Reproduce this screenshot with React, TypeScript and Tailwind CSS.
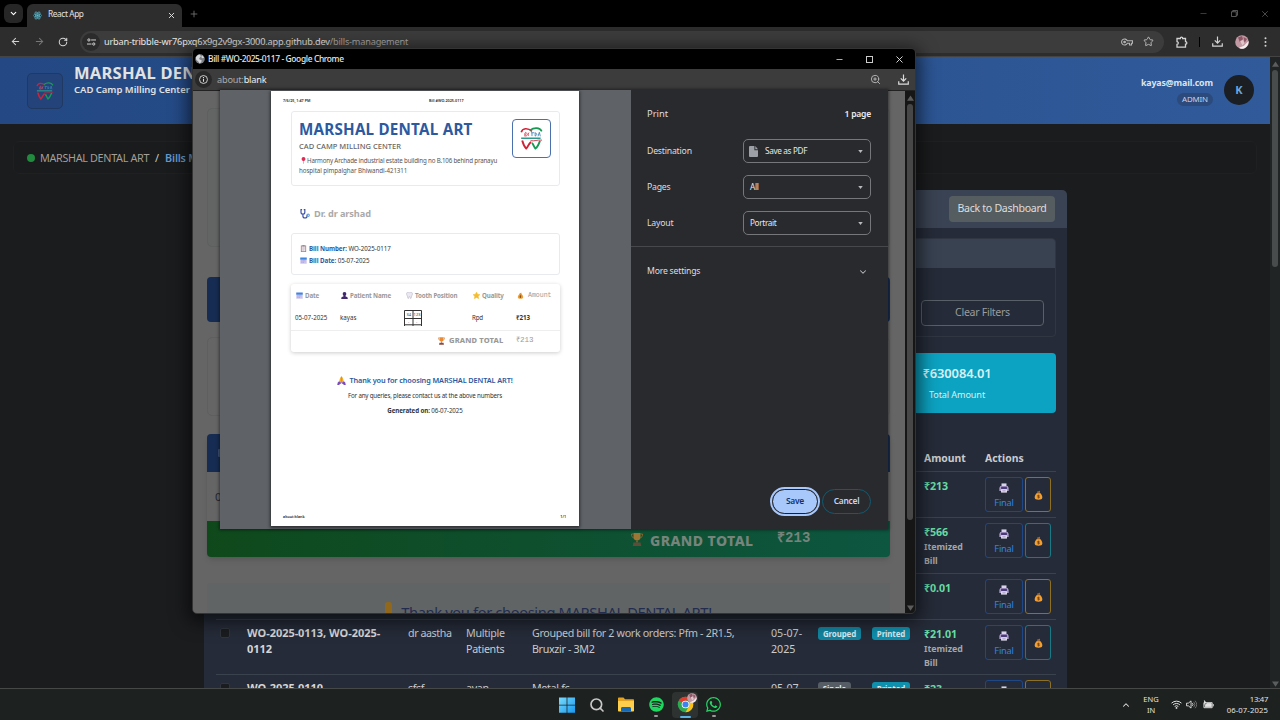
import type { ReactNode } from "react";
import { FaSpotify, FaWhatsapp } from "react-icons/fa";
import { ArrowLeft, ArrowRight, ChevronDown, ChevronUp, Minus, Plus, RotateCw, Search, Star, X, ZoomIn } from "lucide-react";

type IconProps = { className?: string };

function ReactLogo({ className }: IconProps) {
  return (
    <svg viewBox="0 0 24 24" className={className} fill="none" stroke="#58c4dc" strokeWidth="1.6">
      <circle cx="12" cy="12" r="2" fill="#58c4dc" />
      <ellipse cx="12" cy="12" rx="11" ry="4.3" />
      <ellipse cx="12" cy="12" rx="11" ry="4.3" transform="rotate(60 12 12)" />
      <ellipse cx="12" cy="12" rx="11" ry="4.3" transform="rotate(120 12 12)" />
    </svg>
  );
}

function ToothLogo({ className }: IconProps) {
  return (
    <svg viewBox="0 0 24 24" className={className} fill="none" strokeWidth="1.5">
      <path d="M1.3 5.5C2.500 1 8 .5 12.500 4.500" stroke="#cf2438" strokeWidth="1.700" />
      <path d="M10.500 3.300C15 .2 20.500 .5 22.700 4.500" stroke="#189a55" strokeWidth="1.700" />
      <path d="M4.500 9.500c2-1 2.500-4 1.500-4s-2 4 0 4 2-3 3.200-3.500c-.8 1.500-.8 3 .2 3.200" stroke="#d9485c" strokeWidth="0.9" />
      <path d="M11.500 6h3.500M12.500 6v3.500M15.800 9.500V6q3.500 1.500 0 3.500M18.800 9.700l1.400-4.200 1 4.200" stroke="#3c83b8" strokeWidth="0.9" />
      <path d="M1.200 11.800h20.300" stroke="#2a9b8c" strokeWidth="1.500" />
      <path d="M11 14.300c4 .8 7-1.200 12-.6" stroke="#cf2438" strokeWidth="0.9" />
      <path d="M2.300 14c1 3.500 2.700 7 4.200 8.500 1.500-1.200 2.200-4.500 5-7" stroke="#cf2438" strokeWidth="2" />
      <path d="M12.500 16.500c1.500 1.500 2.200 4.500 3.600 6 2-1.300 3.500-4.500 4.700-8" stroke="#189a55" strokeWidth="2" />
    </svg>
  );
}

function DownloadIcon({ className }: IconProps) {
  return (
    <svg viewBox="0 0 12 12" className={className} fill="none" stroke="currentColor" strokeWidth="1.300">
      <path d="M6 .5v7M3 4.800l3 3 3-3M.8 8v3h10.400V8" />
    </svg>
  );
}

function ExtensionIcon({ className }: IconProps) {
  return (
    <svg viewBox="0 0 12 12" className={className} fill="none" stroke="currentColor" strokeWidth="1.300">
      <path d="M1 2.500h3.300c0-1.800 2.400-1.800 2.400 0H9.500v3.200c1.800 0 1.800 2.400 0 2.400v3H1V8.300c1.700 0 1.700-2.600 0-2.600z" />
    </svg>
  );
}

function TuneIcon({ className }: IconProps) {
  return (
    <svg viewBox="0 0 12 10" className={className} fill="none" stroke="currentColor" strokeWidth="1.300">
      <circle cx="2.500" cy="2.300" r="1.500" />
      <path d="M5.500 2.300H12M0 7.700h6" />
      <circle cx="9" cy="7.700" r="1.500" />
    </svg>
  );
}

function KeyIcon({ className }: IconProps) {
  return (
    <svg viewBox="0 0 12 8" className={className} fill="none" stroke="currentColor" strokeWidth="1.100">
      <path d="M6.300 2.800A3 3 0 1 0 6.300 5.200H8.500V7h2V5.200h1V2.800z" />
      <circle cx="3.600" cy="4" r=".8" fill="currentColor" />
    </svg>
  );
}

function GlobeIcon({ className }: IconProps) {
  return (
    <svg viewBox="0 0 12 12" className={className}>
      <circle cx="6" cy="6" r="5.700" fill="#7d8186" />
      <path d="M1 4l2.500-2.800L6 .7 7 3 5 5l.500 1.500L8 7.500 7.500 10l-2 1.500L4 9 1.500 7zM8.500 1.500l2.500 3-2.500.5-1-1.500z" fill="#d6d8db" />
    </svg>
  );
}

function MoneyBag({ className }: IconProps) {
  return (
    <svg viewBox="0 0 12 14" className={className}>
      <path d="M4.500 3.500L5 1.500l1.200 1L7.500.8l.3 2.700z" fill="#e98a1f" />
      <path d="M4.200 3.800h3.600C10 5.500 11.600 8 11.300 11c-.3 2-1.800 2.500-5.300 2.500S1 13 .7 11C.4 8 2 5.500 4.200 3.800z" fill="#f2a032" />
      <path d="M4 4h4" stroke="#9b5b1d" strokeWidth="1.100" />
      <path d="M7.600 7.600H5.200c-1 0-1 1.500 0 1.500h1.600c1 0 1 1.700 0 1.700H4.400M6 6.500v5.400" stroke="#6d3b18" strokeWidth=".9" fill="none" />
    </svg>
  );
}

function PrinterGlyph({ className }: IconProps) {
  return (
    <svg viewBox="0 0 12 12" className={className}>
      <path d="M3 .5h6v4H3z" fill="#d9d3ea" />
      <path d="M1.500 3.500h9L11.600 6v3.500H.4V6z" fill="#a99bc6" />
      <path d="M2.500 4.500h7v3h-7z" fill="#4a3a78" />
      <path d="M2.500 7.500h7v4h-7z" fill="#e9e4f5" />
      <path d="M4 9.500h4" stroke="#8a79b5" />
    </svg>
  );
}

function Trophy({ className }: IconProps) {
  return (
    <svg viewBox="0 0 12 14" className={className}>
      <path d="M2.500.5h7V4c0 3-1.500 4-3.500 4S2.500 7 2.500 4z" fill="#e98a35" />
      <path d="M2.500 1.500h-2c0 2.500.7 3.500 2.500 4M9.500 1.500h2c0 2.500-.7 3.500-2.500 4" stroke="#c9702a" fill="none" />
      <path d="M5.200 8h1.600v2H5.200z" fill="#c9702a" />
      <path d="M2.500 10h7l.8 3.500H1.700z" fill="#8c4a3c" />
    </svg>
  );
}

function Calendar({ className }: IconProps) {
  return (
    <svg viewBox="0 0 12 12" className={className}>
      <path d="M.5 1h11v10.500H.5z" fill="#c9c4ee" />
      <path d="M.5 1h11v3.500H.5z" fill="#3b86e0" />
      <path d="M2.500 6.500h7M2.500 9h5" stroke="#9a8fd6" strokeWidth="1.200" strokeDasharray="1.500 1" />
    </svg>
  );
}

function Clipboard({ className }: IconProps) {
  return (
    <svg viewBox="0 0 12 12" className={className}>
      <path d="M1.500 1h9v10.800h-9z" fill="#b5776b" />
      <path d="M2.800 2.200h6.400v8.500H2.800z" fill="#f1e6ea" />
      <path d="M4 0h4v2.400H4z" fill="#8b8fa6" />
      <path d="M4 4.800h4M4 6.800h4M4 8.800h3" stroke="#a8a3b5" strokeWidth=".8" />
    </svg>
  );
}

function Person({ className }: IconProps) {
  return (
    <svg viewBox="0 0 12 12" className={className} fill="#432a6e">
      <path d="M6 0c2.300 0 3.200 1.500 3 3.500C8.900 5.300 8 6 7.500 6.800c0 1.200 3.800 1 4 3.200V12H.5v-2c.2-2.200 4-2 4-3.200C4 6 3.100 5.300 3 3.500 2.800 1.500 3.700 0 6 0z" />
    </svg>
  );
}

function Tooth({ className }: IconProps) {
  return (
    <svg viewBox="0 0 12 12" className={className} fill="#ece8f2" stroke="#b9b3c6" strokeWidth="1">
      <path d="M1 3c0-3 3-3 5-1.800C8 0 11 0 11 3c0 3-1.500 3-1.700 5.500-.2 3.500-2 3.800-2.300.5C6.800 7 5.200 7 5 9c-.3 3.300-2.100 3-2.300-.5C2.500 6 1 6 1 3z" />
    </svg>
  );
}

function SolidStar({ className }: IconProps) {
  return (
    <svg viewBox="0 0 12 12" className={className}>
      <path d="M6 .3l1.800 3.600 4 .6-2.900 2.800.7 4L6 9.400l-3.600 1.900.7-4L.2 4.500l4-.6z" fill="#f5bd2c" stroke="#f5bd2c" />
    </svg>
  );
}

function Pin({ className }: IconProps) {
  return (
    <svg viewBox="0 0 8 12" className={className}>
      <path d="M4 5v6.500" stroke="#9aa0a8" strokeWidth="1.200" />
      <circle cx="4" cy="3.500" r="3.300" fill="#e02a56" />
    </svg>
  );
}

function Stethoscope({ className }: IconProps) {
  return (
    <svg viewBox="0 0 12 12" className={className} fill="none" stroke="#3b4fa8" strokeWidth="1.400">
      <path d="M2.500.8H1.200v3a2.300 2.300 0 0 0 4.600 0v-3H4.500M3.500 6v2.300c0 3.300 5 3.300 5 0V7" />
      <circle cx="9.800" cy="7.600" r="1.400" stroke="#6aa0dd" />
    </svg>
  );
}

function Praying({ className }: IconProps) {
  return (
    <svg viewBox="0 0 12 12" className={className}>
      <path d="M6 .3c-1.500 1-2.500 4-3 7l3 2 3-2c-.5-3-1.500-6-3-7z" fill="#f3a92c" />
      <path d="M6 1v8" stroke="#c9761c" strokeWidth=".6" />
      <path d="M2.800 7L6 9.300 2.500 12H.3L1 8.500zM9.200 7L6 9.300 9.500 12h2.200L11 8.500z" fill="#7b4bb8" />
    </svg>
  );
}

function ChromeIcon({ className }: IconProps) {
  return (
    <svg viewBox="0 0 24 24" className={className}>
      <circle cx="12" cy="12" r="11" fill="#2da94f" />
      <path d="M12 12L2.500 6.500A11 11 0 0 1 21.500 6.500H12z" fill="#e33b2e" />
      <path d="M12 12l9.500-5.500A11 11 0 0 1 12 23l4.700-8.300z" fill="#fbc116" />
      <circle cx="12" cy="12" r="5.400" fill="#fff" />
      <circle cx="12" cy="12" r="4.300" fill="#3f82ee" />
    </svg>
  );
}

function Avatar({ className }: IconProps) {
  return (
    <svg viewBox="0 0 14 14" className={className}>
      <circle cx="7" cy="7" r="6.800" fill="#c29aa4" />
      <path d="M3 2.500L7 1l1 3-3 3.500zM8.500 2l3.500 2-2.500 4z" fill="#8e5666" />
      <path d="M13.600 6c.3 4-3 7.800-6.600 7.800-1.500 0-2.500-.5-3-1l5-2z" fill="#f3eff0" />
      <path d="M5 6l3-1 1.500 3-2 2.500z" fill="#e2c6cc" />
    </svg>
  );
}

function FolderIcon({ className }: IconProps) {
  return (
    <svg viewBox="0 0 16 15" className={className}>
      <path d="M0 1.500C0 .8.400.5 1 .5h4.500L7 2.200h8c.6 0 1 .4 1 1V5H0z" fill="#e5a322" />
      <path d="M0 4h16v9.500c0 .6-.4 1-1 1H1c-.6 0-1-.4-1-1z" fill="#fdcf4d" />
      <path d="M3 14.500v-3c0-1 .6-1.500 1.500-1.500h7c.9 0 1.500.5 1.500 1.500v3z" fill="#1769b3" />
    </svg>
  );
}

function Caret() {
  return (
    <svg viewBox="0 0 6 4" className="h-[3px] w-[5px] shrink-0">
      <path d="M0 0h6L3 4z" fill="#b8babd" />
    </svg>
  );
}

function Arrow({ down = false, className = "" }: { down?: boolean; className?: string }) {
  return (
    <svg viewBox="0 0 8 6" className={`h-[6px] w-[7px] ${className}`}>
      <path d={down ? "M0 0h8L4 6z" : "M0 6h8L4 0z"} fill="currentColor" />
    </svg>
  );
}

function BrowserChrome() {
  return (
    <>
      <div className="flex h-[27px] shrink-0 items-center bg-black">
        <div className="ml-1 flex size-[19px] items-center justify-center rounded-[6px] bg-[#262626]">
          <ChevronDown className="size-[9px] text-white" strokeWidth={3} />
        </div>
        <div className="ml-1 flex h-[23px] w-[155px] items-center self-end rounded-t-[6px] bg-[#2d2d2d] pb-[1px] pl-[6px] pr-[6px] text-[8.300px] text-[#e3e3e3]">
          <ReactLogo className="size-[9px]" />
          <span className="ml-[6px] grow pb-px tracking-[-0.4px]">React App</span>
          <X className="size-[9px]" strokeWidth={2.500} />
        </div>
        <Plus className="ml-[7px] size-[10px] text-[#777]" strokeWidth={2} />
        <div className="ml-auto mr-[10px] flex items-center text-[#666]">
          <Minus className="size-[9px]" strokeWidth={1.500} />
          <svg viewBox="0 0 8 8" className="ml-[23px] size-[7px]" fill="none" stroke="currentColor">
            <path d="M.5 2h5.500v5.500H.5zM2 2V.5h5.500V6H6" />
          </svg>
          <X className="ml-[22px] size-[10px]" strokeWidth={1.700} />
        </div>
      </div>
      <div className="flex h-[30px] shrink-0 items-center border-b border-[#444] bg-[#2d2d2d] text-[#d4d4d4]">
        <ArrowLeft className="ml-[10px] size-[11px]" strokeWidth={2.200} />
        <ArrowRight className="ml-[13px] size-[11px] text-[#777]" strokeWidth={2.200} />
        <RotateCw className="ml-[13px] size-[10px]" strokeWidth={2.500} />
        <div className="ml-[12px] flex h-[22px] w-[1084px] items-center rounded-full bg-[#3c3c3c] pl-[2px] pr-[10px]">
          <div className="flex size-[18px] items-center justify-center rounded-full bg-[#2b2b2b]">
            <TuneIcon className="h-[8px] w-[9px]" />
          </div>
          <span className="ml-[4px] grow whitespace-nowrap pt-px text-[9.200px] tracking-[-0.2px] text-[#e6e6e6]">
            urban-tribble-wr76pxq6x9g2v9gx-3000.app.github.dev<span className="text-[#a8a8a8]">/bills-management</span>
          </span>
          <KeyIcon className="h-[8px] w-[12px] text-[#b5b5b5]" />
          <Star className="ml-[10px] size-[11px] text-[#c0c0c0]" strokeWidth={2} />
        </div>
        <ExtensionIcon className="ml-[12px] size-[12px]" />
        <div className="ml-[11px] h-[10px] w-px bg-black" />
        <DownloadIcon className="ml-[12px] size-[11px]" />
        <Avatar className="ml-[12px] size-[14px]" />
        <svg viewBox="0 0 3 12" className="ml-[15px] h-[10px] w-[3px]" fill="currentColor">
          <circle cx="1.500" cy="1.500" r="1.200" />
          <circle cx="1.500" cy="6" r="1.200" />
          <circle cx="1.500" cy="10.500" r="1.200" />
        </svg>
      </div>
    </>
  );
}

function SiteHeader() {
  return (
    <header className="flex h-[67px] shrink-0 items-start bg-linear-to-r from-[#234883] to-[#305a9a]">
      <div className="ml-[27px] mt-[16px] flex size-[36px] items-center justify-center rounded-[5px] border border-[#203962] bg-[#24437a]">
        <ToothLogo className="size-[18px]" />
      </div>
      <div className="ml-[11px] mt-[6px] whitespace-nowrap text-[#e2e2e2]">
        <h1 className="h-[20px] text-[16.500px]/[20px] font-bold tracking-[0.25px]">MARSHAL DENTAL ART</h1>
        <p className="mt-px text-[9.500px]/[12px] font-semibold tracking-[-0.02px]">CAD Camp Milling Center</p>
      </div>
      <div className="ml-auto mt-[20px] flex flex-col items-end">
        <span className="text-[8.800px]/[13px] font-bold tracking-[-0.1px] text-[#dfe3ea]">kayas@mail.com</span>
        <span className="mt-[3px] flex h-[13px] w-[36px] items-center justify-center rounded-full bg-[#2c4a7c] text-[7.900px] tracking-[-0.15px] text-[#c8d3e6]">ADMIN</span>
      </div>
      <div className="ml-[11px] mr-[16px] mt-[18px] flex size-[30px] items-center justify-center rounded-full bg-[#1b1e23] pt-px text-[11px] font-bold text-[#6aa6dc]">K</div>
    </header>
  );
}

type Bill = {
  height: string;
  amount: string;
  itemized?: boolean;
  tone: string;
  number?: string;
  doctor?: string;
  patient?: string;
  work?: string;
  date?: string;
  type?: string;
  typeTone?: string;
};

const bills: Bill[] = [
  { height: "h-[46px]", amount: "₹213", tone: "border-[#8d7022]" },
  { height: "h-[56px]", amount: "₹566", itemized: true, tone: "border-[#197985]" },
  { height: "h-[46px]", amount: "₹0.01", tone: "border-[#8d7022]" },
  {
    height: "h-[55px]", amount: "₹21.01", itemized: true, tone: "border-[#197985]",
    number: "WO-2025-0113, WO-2025-0112", doctor: "dr aastha", patient: "Multiple Patients",
    work: "Grouped bill for 2 work orders: Pfm - 2R1.5, Bruxzir - 3M2", date: "05-07-2025", type: "Grouped", typeTone: "bg-[#1285a0] w-[43px]",
  },
  {
    height: "h-[55px]", amount: "₹23", tone: "border-[#8d7022]",
    number: "WO-2025-0110", doctor: "sfsf", patient: "ayan",
    work: "Metal fc", date: "05-07-2025", type: "Single", typeTone: "bg-[#565d65] w-[33px]",
  },
];

function Badge({ tone, children }: { tone: string; children: ReactNode }) {
  return <span className={`mt-[2px] flex h-[13px] items-center justify-center rounded-[3px] text-[7.900px] font-bold tracking-[-0.1px] text-[#dcebf0] ${tone}`}>{children}</span>;
}

function BillRow({ bill }: { bill: Bill }) {
  return (
    <div className={`grid shrink-0 grid-cols-[31px_161px_58px_66px_239px_47px_54px_52px_61px_1fr] items-start border-t border-[#3a424d] pt-[5px] text-[10.700px]/[16px] text-[#c9cbcf] ${bill.height}`}>
      <span className="ml-[4px] mt-[3px] size-[10px] rounded-[2px] border border-[#30353d] bg-[#1a1c20]" />
      <span className="w-[150px] text-[11px] font-bold tracking-[-0.04px] text-[#d6d6d6]">{bill.number}</span>
      <span className="tracking-[-0.43px]">{bill.doctor}</span>
      <span className="w-[50px] tracking-[-0.3px]">{bill.patient}</span>
      <span className="w-[215px] tracking-[-0.33px]">{bill.work}</span>
      <span className="w-[36px] tracking-[-0.05px]">{bill.date}</span>
      <span>{bill.type && <Badge tone={bill.typeTone ?? ""}>{bill.type}</Badge>}</span>
      <span>{bill.type && <Badge tone="w-[38px] bg-[#0f90ad]">Printed</Badge>}</span>
      <span>
        <span className="mt-[0.5px] block text-[10.700px]/[16px] font-bold tracking-[-0.1px] text-[#67dca5]">{bill.amount}</span>
        {bill.itemized && <span className="mt-[0.5px] block w-[44px] text-[8.800px]/[14px] font-bold text-[#a6a6a6]">Itemized Bill</span>}
      </span>
      <span className="flex gap-[2px]">
        <span className="flex h-[35px] w-[38px] flex-col items-center rounded-[3px] border border-[#204785] pt-[5px] text-[9.300px]/[14px] tracking-[-0.25px] text-[#2f85e0]">
          <PrinterGlyph className="size-[10px]" />
          <span className="mt-[3px]">Final</span>
        </span>
        <span className={`flex h-[35px] w-[26px] items-center justify-center rounded-[3px] border ${bill.tone}`}>
          <MoneyBag className="mt-px h-[10px] w-[9px]" />
        </span>
      </span>
    </div>
  );
}

function BillsPage() {
  return (
    <div className="flex min-h-0 grow">
      <div className="flex w-[1270px] flex-col overflow-hidden bg-[#1b1c1e]">
        <SiteHeader />
        <div className="ml-[13px] mt-[17px] flex h-[33px] w-[1244px] shrink-0 items-center rounded-[6px] border border-[#1f2022] bg-[#1a1b1c] pl-[13px] text-[10.800px] text-[#a29f98]">
          <span className="size-[8px] rounded-full bg-[#218a3e]" />
          <span className="ml-[5px] pt-px tracking-[-0.33px]">MARSHAL DENTAL ART</span>
          <span className="ml-[6px] pt-px text-[#ccc]">/</span>
          <span className="ml-[6px] pt-px font-semibold tracking-[-0.2px] text-[#6399d0]">Bills Management</span>
        </div>
        <main className="ml-[204px] mt-[16px] flex w-[863px] grow flex-col overflow-hidden rounded-t-[5px] bg-[#252b38]">
          <div className="flex h-[38px] shrink-0 items-center justify-end bg-[#3a4353] pr-[12px]">
            <span className="flex h-[26px] w-[106px] items-center justify-center rounded-[4px] bg-[#565d60] text-[10.600px] tracking-[-0.3px] text-[#dedede]">Back to Dashboard</span>
          </div>
          <section className="ml-[12px] mt-[10px] h-[99px] w-[840px] shrink-0 overflow-hidden rounded-[4px] border border-[#303743]">
            <div className="h-[29px] bg-[#384251]" />
            <div className="flex justify-end pr-[11px] pt-[32px]">
              <span className="flex h-[26px] w-[123px] items-center justify-center rounded-[4px] border border-[#5a6068] text-[10.600px] tracking-[-0.3px] text-[#9b9b9b]">Clear Filters</span>
            </div>
          </section>
          <section className="ml-[12px] mt-[16px] flex h-[60px] w-[840px] shrink-0 justify-end rounded-[4px] bg-[#0ca2c1]">
            <div className="flex w-[198px] flex-col items-center text-[#d9f0f4]">
              <span className="mt-[12px] text-[12.900px]/[16px] font-semibold tracking-[-0.1px]">₹630084.01</span>
              <span className="mt-[7px] text-[9.100px]/[14px] tracking-[-0.1px]">Total Amount</span>
            </div>
          </section>
          <section className="ml-[12px] mt-[31px] flex w-[840px] flex-col">
            <div className="flex h-[27px] shrink-0 items-center pl-[708px] pt-[3px] text-[10.400px] font-bold text-[#c9cbcf]">
              <span className="w-[61px]">Amount</span>
              <span>Actions</span>
            </div>
            {bills.map((bill) => <BillRow key={bill.amount} bill={bill} />)}
          </section>
        </main>
      </div>
      <div className="flex w-[10px] flex-col items-center bg-[#202425] text-[#5b5d5e]">
        <Arrow className="mt-[4px]" />
        <div className="mt-[3px] h-[197px] w-[6px] rounded-full bg-[#484c4d]" />
        <Arrow down className="mb-[1px] mt-auto" />
      </div>
    </div>
  );
}

function Taskbar() {
  return (
    <footer className="flex h-[32px] shrink-0 items-center border-t border-[#454846] bg-[#1d211f] text-[#e4e4e4]">
      <svg viewBox="0 0 16 16" className="ml-[559px] size-[16px]">
        <defs>
          <linearGradient id="winBlue" x2="1" y2="1">
            <stop stopColor="#7adcfb" />
            <stop offset="1" stopColor="#1798f0" />
          </linearGradient>
        </defs>
        <path d="M0 .5h7.600v7.200H0zM8.400.5H16v7.200H8.400zM0 8.500h7.600v7.200H0zM8.400 8.500H16v7.200H8.400z" fill="url(#winBlue)" />
      </svg>
      <Search className="ml-[14px] size-[16px] text-[#c9c9c9]" strokeWidth={2.500} />
      <FolderIcon className="ml-[13px] h-[15px] w-[16px]" />
      <div className="ml-[14px] flex h-full w-[16px] flex-col items-center pt-[8px]">
        <FaSpotify className="size-[15px] text-[#1fd760]" />
        <span className="mt-[3px] h-[2px] w-[4px] rounded-full bg-[#9a9a9a]" />
      </div>
      <div className="ml-[8px] flex h-[26px] w-[26px] flex-col items-center rounded-[4px] bg-[#2e3230] pt-[4px]">
        <div className="relative">
          <ChromeIcon className="size-[17px]" />
          <Avatar className="absolute -right-[3px] -top-[3px] size-[10px]" />
        </div>
        <span className="mt-[3px] h-[2px] w-[11px] rounded-full bg-[#5db2e4]" />
      </div>
      <div className="ml-[7px] flex h-full w-[17px] flex-col items-center pt-[7px]">
        <FaWhatsapp className="size-[17px] text-[#25d366]" />
        <span className="mt-[2px] h-[2px] w-[4px] rounded-full bg-[#9a9a9a]" />
      </div>
      <div className="ml-auto mr-[12px] flex items-center">
        <ChevronUp className="size-[10px]" strokeWidth={2.500} />
        <span className="ml-[11px] w-[18px] text-center text-[7.500px]/[11px]">ENG IN</span>
        <svg viewBox="0 0 12 10" className="ml-[11px] h-[9px] w-[11px]" fill="none" stroke="currentColor">
          <path d="M.5 3.500a8 8 0 0 1 11 0M2.200 5.400a5.500 5.500 0 0 1 7.600 0M4 7.200a3 3 0 0 1 4 0" strokeWidth="1.100" />
          <circle cx="6" cy="8.800" r="1" fill="currentColor" stroke="none" />
        </svg>
        <svg viewBox="0 0 12 10" className="ml-[4px] h-[9px] w-[11px]" fill="none" stroke="currentColor">
          <path d="M.5 3.500h2L5.500 1v8L2.500 6.500h-2zM7 3.500q1.300 1.500 0 3" />
          <path d="M8.500 2q2.600 3 0 6M10 .8q3.500 4.200 0 8.400" stroke="#777" />
        </svg>
        <svg viewBox="0 0 12 9" className="ml-[6px] h-[9px] w-[11px]" fill="none" stroke="currentColor">
          <path d="M1 2.500h9v5.500H1z" />
          <path d="M4 3.500h5v3.500H2.500V5zM1 0l2 2-1.500 2.500M11.200 4v2.500" fill="currentColor" />
        </svg>
        <div className="ml-[12px] flex h-[22px] w-[42px] flex-col items-end whitespace-nowrap text-[7.700px]/[11px]">
          <span className="tracking-[-0.3px]">13:47</span>
          <span className="tracking-[0.12px]">06-07-2025</span>
        </div>
      </div>
    </footer>
  );
}

function DimmedBill() {
  return (
    <div className="flex h-full w-[712px] flex-col overflow-hidden bg-[#656565] pl-[14px] pt-[17px]">
      <div className="h-[139px] w-[683px] shrink-0 rounded-[5px] border border-[#5e6060] bg-[#636464]" />
      <div className="mt-[30px] h-[45px] w-[683px] shrink-0 rounded-[4px] bg-[#172c52]" />
      <div className="mt-[15px] h-[79px] w-[683px] shrink-0 rounded-[5px] border border-[#5d5f60]" />
      <div className="mt-[18px] w-[683px] shrink-0 overflow-hidden rounded-[4px] shadow-md">
        <div className="flex h-[38px] items-center bg-[#172c52] pl-[11px]">
          <span className="h-[8px] w-[8px] rounded-[1px] bg-[#3e4f76]" />
        </div>
        <div className="flex h-[49px] items-center pl-[8px] text-[11.500px] text-[#26282c]">05-07-2025</div>
        <div className="flex h-[36px] items-center bg-linear-to-r from-[#0f491b] to-[#0d5640] pl-[424px]">
          <Trophy className="h-[15px] w-[12px] opacity-65" />
          <span className="ml-[7px] w-[127px] whitespace-nowrap pt-[2px] text-[14px] font-extrabold tracking-[0.45px] text-[#77847c]">GRAND TOTAL</span>
          <span className="pb-px font-['Liberation_Mono'] text-[14px] font-bold tracking-[0.1px] text-[#77847c]">₹213</span>
        </div>
      </div>
      <div className="mt-[26px] flex h-[40px] w-[683px] shrink-0 items-start justify-center bg-[#616464] pt-[19px] text-[#222c4f]">
        <span className="h-[20px] w-[7px] rounded-t-[3px] bg-[#91681b]" />
        <span className="ml-[9px] whitespace-nowrap text-[14.700px]/[20px] tracking-[-0.38px]">Thank you for choosing MARSHAL DENTAL ART!</span>
      </div>
    </div>
  );
}

function ToothChart() {
  return (
    <svg viewBox="0 0 18 16" className="h-[16px] w-[18px]" fill="none" stroke="#333" strokeWidth="1">
      <path d="M.5 16V.5h17V16M9 0v16M.5 8.500h17M.5 14.800h17" />
      <g fill="#333" stroke="none" fontSize="4" fontFamily="Noto Sans">
        <text x="2.500" y="6">34</text>
        <text x="9.600" y="6">123</text>
        <text x="4" y="13">-</text>
        <text x="12" y="13">-</text>
      </g>
    </svg>
  );
}

function BillPaper() {
  return (
    <article className="flex h-[435px] w-[308px] flex-col bg-white text-[#333] shadow-[0_1px_3px_1px_#0008]">
      <div className="flex h-[20px] shrink-0 pl-[12px] pt-[7px] text-[3.700px]/[5px] font-semibold text-[#222]">
        <span className="w-[146px]">7/6/25, 1:47 PM</span>
        <span>Bill #WO-2025-0117</span>
      </div>
      <section className="ml-[20px] flex h-[75px] w-[269px] shrink-0 rounded-[3px] border border-[#e8eaf0] pl-[7px]">
        <div className="w-[213px] whitespace-nowrap">
          <h2 className="mt-[7px] text-[15.200px]/[20px] font-bold tracking-[0.22px] text-[#2c5aa0]">MARSHAL DENTAL ART</h2>
          <p className="mt-[2px] text-[7.500px]/[11px] font-medium tracking-[0.02px] text-[#666]">CAD CAMP MILLING CENTER</p>
          <p className="mt-[4px] flex items-center text-[6.200px]/[9.500px] tracking-[-0.17px] text-[#555]">
            <Pin className="ml-[2px] mr-[1px] h-[7px] w-[5px]" />
            Harmony Archade industrial estate building no B.106 behind pranayu
          </p>
          <p className="text-[6.200px]/[9.500px] tracking-[-0.06px] text-[#555]">hospital pimpalghar Bhiwandi-421311</p>
        </div>
        <div className="mt-[7px] flex size-[39px] items-center justify-center rounded-[4px] border border-[#4b70ae]">
          <ToothLogo className="size-[23px]" />
        </div>
      </section>
      <div className="ml-[29px] mt-[17px] flex h-[21px] shrink-0 items-center text-[9.200px] font-bold text-[#aaa]">
        <Stethoscope className="size-[10px]" />
        <span className="ml-[4px] tracking-[-0.1px]">Dr. dr arshad</span>
      </div>
      <section className="ml-[20px] mt-[9px] flex h-[42px] w-[269px] shrink-0 flex-col justify-center rounded-[3px] border border-[#e8eaf0] pl-[8px] pt-px text-[6.200px]/[11.300px] tracking-[-0.05px]">
        <div className="flex items-center"><Clipboard className="size-[7px]" /><span className="ml-[2px]"><b className="text-[#2c5aa0]">Bill Number:</b> WO-2025-0117</span></div>
        <div className="flex items-center"><Calendar className="size-[7px]" /><span className="ml-[2px]"><b className="text-[#2c5aa0]">Bill Date:</b> 05-07-2025</span></div>
      </section>
      <section className="ml-[20px] mt-[9px] h-[68px] w-[269px] shrink-0 rounded-[3px] text-[6.200px] shadow-[0_1px_4px_#0003]">
        <div className="grid h-[24px] grid-cols-[45px_65px_67px_44px_1fr] items-center whitespace-nowrap pl-[5px] font-bold tracking-[-0.13px] text-[#999]">
          <span className="flex items-center gap-[2px]"><Calendar className="size-[7px]" />Date</span>
          <span className="flex items-center gap-[2px]"><Person className="size-[7px]" />Patient Name</span>
          <span className="flex items-center gap-[2px]"><Tooth className="size-[7px]" />Tooth Position</span>
          <span className="flex items-center gap-[2px]"><SolidStar className="size-[7px]" />Quality</span>
          <span className="flex items-center gap-[4px] font-['Liberation_Mono'] text-[6.600px] font-normal tracking-[-0.05px]"><MoneyBag className="size-[7px]" />Amount</span>
        </div>
        <div className="grid h-[23px] grid-cols-[45px_64px_68px_44px_1fr] items-center border-b border-[#eee] pb-[2px] pl-[4px]">
          <span>05-07-2025</span>
          <span>kayas</span>
          <span><ToothChart /></span>
          <span className="tracking-[-0.2px]">Rpd</span>
          <span className="font-bold">₹213</span>
        </div>
        <div className="flex h-[20px] items-center pl-[147px] text-[7.500px] font-extrabold text-[#999]">
          <Trophy className="h-[8px] w-[7px]" />
          <span className="ml-[4px] w-[67px] tracking-[0.15px]">GRAND TOTAL</span>
          <span className="font-['Liberation_Mono'] text-[7.500px] font-normal">₹213</span>
        </div>
      </section>
      <div className="mt-[19px] flex flex-col items-center">
        <p className="flex h-[18px] items-center text-[7.300px] font-semibold tracking-[-0.1px] text-[#2c5aa0]">
          <Praying className="mr-[3px] size-[9px]" />Thank you for choosing MARSHAL DENTAL ART!
        </p>
        <p className="mt-px text-[6.200px]/[12px] tracking-[-0.18px]">For any queries, please contact us at the above numbers</p>
        <p className="mt-[2px] text-[6.200px]/[13px] tracking-[-0.1px]"><b>Generated on:</b> 06-07-2025</p>
      </div>
      <div className="mt-auto flex justify-between pb-[7px] pl-[12px] pr-[13px] text-[3.700px]/[5px] font-semibold text-[#222]">
        <span>about:blank</span>
        <span>1/1</span>
      </div>
    </article>
  );
}

function PrintOption({ label, value, file = false }: { label: string; value: string; file?: boolean }) {
  return (
    <div className="flex h-[36px] items-center justify-between pl-[16px] pr-[17px]">
      <span className="pt-[2px] tracking-[-0.2px]">{label}</span>
      <span className={`flex h-[24px] w-[128px] items-center rounded-[5px] border border-[#75777b] pr-[7px] text-[8.200px] tracking-[-0.33px] text-[#e6e7ea] ${file ? "pl-[5px]" : "pl-[6px]"}`}>
        {file && (
          <svg viewBox="0 0 10 12" className="mr-[7px] h-[11px] w-[9px]">
            <path d="M1 0h5v4.500h4V11c0 .6-.4 1-1 1H1c-.6 0-1-.4-1-1V1c0-.6.4-1 1-1zM7 0l3 3.500H7z" fill="#9da1a7" />
          </svg>
        )}
        <span className="grow">{value}</span>
        <Caret />
      </span>
    </div>
  );
}

function PrintDialog() {
  return (
    <div className="absolute left-[27px] top-[41px] flex h-[439px] w-[668px] bg-[#292a2d] shadow-[0_0_3px_1px_#0007]">
      <div className="flex w-[411px] shrink-0 bg-[#5f6368] pl-[51px] pt-[1px]">
        <BillPaper />
      </div>
      <div className="flex grow flex-col text-[8.700px] text-[#dcdde0]">
        <div className="flex h-[43px] items-center justify-between pl-[16px] pr-[17px] pt-[6px]">
          <span className="text-[9.400px]">Print</span>
          <span className="text-[8.500px] font-semibold tracking-[-0.2px] text-[#ececee]">1 page</span>
        </div>
        <PrintOption label="Destination" value="Save as PDF" file />
        <PrintOption label="Pages" value="All" />
        <PrintOption label="Layout" value="Portrait" />
        <div className="mt-[5px] flex h-[50px] items-center justify-between border-t border-[#46484b] pl-[16px] pr-[20px]">
          <span className="tracking-[-0.22px]">More settings</span>
          <ChevronDown className="size-[10px] text-[#b9bbbe]" strokeWidth={2.500} />
        </div>
        <div className="mb-[15px] mt-auto flex items-center justify-end gap-[4px] pr-[17px] text-[8.400px] font-semibold tracking-[-0.25px]">
          <span className="flex h-[25px] w-[46px] items-center justify-center rounded-full border border-[#1f2023] bg-[#a8c7fa] text-[#12306a] outline-2 outline-[#a8c7fa]">Save</span>
          <span className="flex h-[25px] w-[49px] items-center justify-center rounded-full border border-[#115a72] text-[#c3d6f7]">Cancel</span>
        </div>
      </div>
    </div>
  );
}

function BillWindow() {
  return (
    <div className="absolute left-[192px] top-[48px] flex h-[566px] w-[724px] flex-col overflow-hidden rounded-[5px] border border-[#343434] bg-[#3c3c3c] shadow-[0_4px_18px_4px_#0009]">
      <div className="flex h-[20px] shrink-0 items-center bg-black pl-[2px] text-[8.400px] text-[#e8e8e8]">
        <GlobeIcon className="size-[10px]" />
        <span className="ml-[3px] grow font-medium tracking-[-0.35px]">Bill #WO-2025-0117 - Google Chrome</span>
        <Minus className="size-[9px]" strokeWidth={2} />
        <span className="ml-[22px] size-[7px] border border-[#ccc]" />
        <X className="ml-[21px] mr-[10px] size-[11px]" strokeWidth={2} />
      </div>
      <div className="flex h-[22px] shrink-0 items-center border-b border-[#222] bg-[#3c3c3c] pl-[2px] text-[#ddd]">
        <span className="flex size-[17px] items-center justify-center rounded-full bg-[#282828]">
          <svg viewBox="0 0 10 10" className="size-[9px]" fill="none" stroke="currentColor">
            <circle cx="5" cy="5" r="4.400" />
            <path d="M5 4.500v3M5 2.300v1.200" strokeWidth="1.200" />
          </svg>
        </span>
        <span className="ml-[5px] grow pt-px text-[9.200px] tracking-[-0.2px] text-[#aaa]">about:<span className="text-[#eee]">blank</span></span>
        <ZoomIn className="size-[11px] text-[#bbb]" strokeWidth={2} />
        <DownloadIcon className="ml-[17px] mr-[6px] size-[11px]" />
      </div>
      <div className="flex min-h-0 grow">
        <DimmedBill />
        <div className="flex w-[10px] shrink-0 flex-col items-center bg-[#161616] text-[#5c5c5c]">
          <Arrow className="mt-[4px]" />
          <div className="mt-[3px] h-[416px] w-[6px] rounded-full bg-[#474747]" />
          <Arrow down className="mb-[2px] mt-auto" />
        </div>
      </div>
      <PrintDialog />
    </div>
  );
}

export default function App() {
  return (
    <div className="relative flex h-[720px] w-[1280px] flex-col overflow-hidden bg-[#1b1c1e] font-['Noto_Sans',sans-serif]">
      <BrowserChrome />
      <BillsPage />
      <Taskbar />
      <BillWindow />
    </div>
  );
}
